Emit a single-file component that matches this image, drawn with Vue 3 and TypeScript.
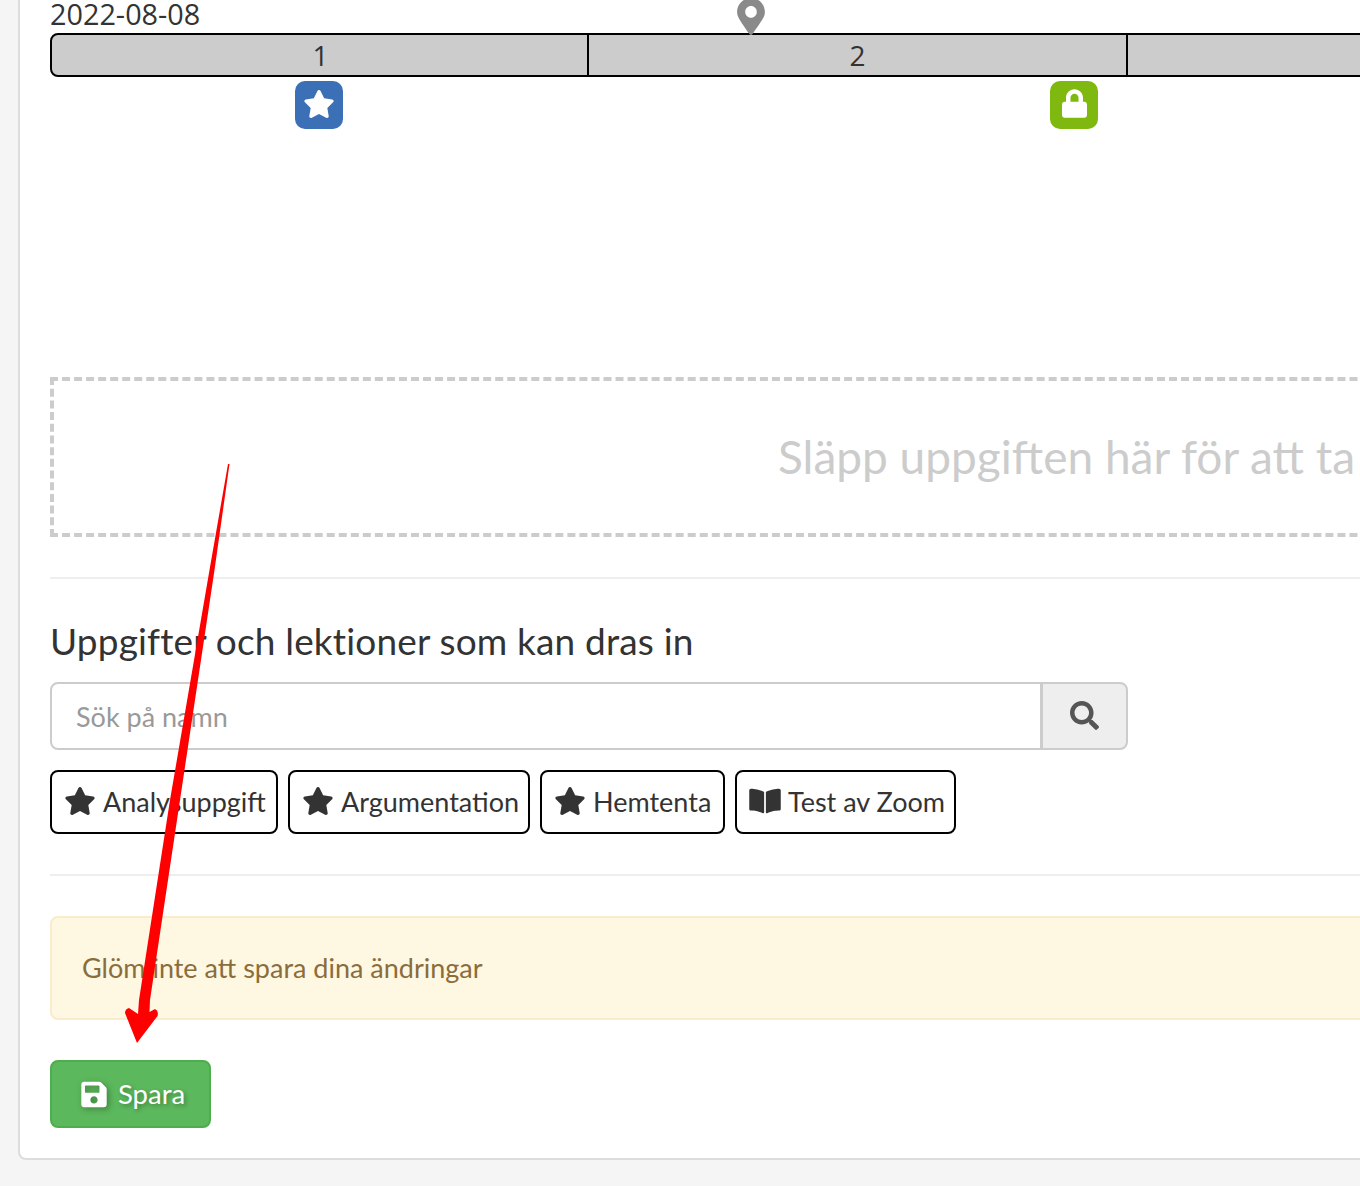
<script setup lang="ts">
const starPath = 'M259.3 17.8L194 150.2 47.9 171.5c-26.2 3.8-36.7 36.1-17.7 54.6l105.7 103-25 145.5c-4.5 26.3 23.2 46 46.4 33.7L288 439.6l130.7 68.7c23.2 12.2 50.9-7.4 46.4-33.7l-25-145.5 105.7-103c19-18.5 8.5-50.8-17.7-54.6L382 150.2 316.7 17.8c-11.7-23.6-45.6-23.9-57.4 0z'
const bookPath = 'M542.22 32.05c-54.8 3.11-163.72 14.43-230.96 55.59-4.64 2.84-7.27 7.89-7.27 13.17v363.87c0 11.55 12.63 18.85 23.28 13.49 69.18-34.82 169.23-44.32 218.7-46.92 16.89-.89 30.02-14.43 30.02-30.66V62.75c.01-17.71-15.35-31.74-33.77-30.7zM264.73 87.64C197.5 46.48 88.58 35.17 33.78 32.05 15.36 31.01 0 45.04 0 62.75V400.6c0 16.24 13.13 29.78 30.02 30.66 49.49 2.6 149.59 12.11 218.77 46.95 10.62 5.35 23.21-1.94 23.21-13.46V100.63c0-5.29-2.62-10.25-7.27-12.99z'
const tags = [
  { label: 'Analysuppgift', path: starPath, width: 228 },
  { label: 'Argumentation', path: starPath, width: 242 },
  { label: 'Hemtenta', path: starPath, width: 185 },
  { label: 'Test av Zoom', path: bookPath, width: 221 },
]
const segments = ['1', '2', '']
</script>

<template>
  <div class="page">
    <main class="card">
      <div class="date">2022-08-08</div>
      <div class="timeline">
        <svg class="pin" viewBox="0 0 384 512"><path d="M172.268 501.67C26.97 291.031 0 256.54 0 192 0 85.961 85.961 0 192 0s192 85.961 192 192c0 64.54-26.97 99.031-172.268 309.67-9.535 13.774-29.93 13.773-39.464 0zM192 272c44.183 0 80-35.817 80-80s-35.817-80-80-80-80 35.817-80 80 35.817 80 80 80z" /></svg>
        <div class="bar">
          <div v-for="(s, i) in segments" :key="i" class="segment">{{ s }}</div>
        </div>
        <div class="marker marker-star">
          <svg width="32" height="28" viewBox="0 0 576 512"><path :d="starPath" /></svg>
        </div>
        <div class="marker marker-lock">
          <svg width="25" height="29" viewBox="0 0 448 512"><path d="M400 224h-24v-72C376 68.2 307.8 0 224 0S72 68.2 72 152v72H48c-26.5 0-48 21.5-48 48v192c0 26.5 21.5 48 48 48h352c26.5 0 48-21.5 48-48V272c0-26.5-21.5-48-48-48zm-104 0H152v-72c0-39.7 32.3-72 72-72s72 32.3 72 72v72z" /></svg>
        </div>
      </div>

      <div class="dropzone">Släpp uppgiften här för att ta</div>
      <hr class="rule rule-top" />

      <h2 class="heading">Uppgifter och lektioner som kan dras in</h2>

      <div class="search">
        <div class="search-input">Sök på namn</div>
        <div class="search-btn">
          <svg width="29" height="29" viewBox="0 0 512 512"><path d="M505 442.7L405.3 343c-4.5-4.5-10.6-7-17-7H372c27.6-35.3 44-79.7 44-128C416 93.1 322.9 0 208 0S0 93.1 0 208s93.1 208 208 208c48.3 0 92.7-16.4 128-44v16.3c0 6.4 2.5 12.5 7 17l99.7 99.7c9.4 9.4 24.6 9.4 33.9 0l28.3-28.3c9.4-9.4 9.4-24.6.1-34zM208 336c-70.7 0-128-57.2-128-128 0-70.7 57.2-128 128-128 70.7 0 128 57.2 128 128 0 70.7-57.2 128-128 128z" /></svg>
        </div>
      </div>

      <div class="tags">
        <div v-for="t in tags" :key="t.label" class="tag" :style="{ width: t.width + 'px' }">
          <svg width="32" height="28" viewBox="0 0 576 512"><path :d="t.path" /></svg>
          <span>{{ t.label }}</span>
        </div>
      </div>

      <hr class="rule rule-bottom" />

      <div class="alert">Glöm inte att spara dina ändringar</div>

      <button class="save" type="button">
        <svg width="26" height="29" viewBox="0 0 448 512"><path d="M433.941 129.941l-83.882-83.882A48 48 0 0 0 316.118 32H48C21.49 32 0 53.49 0 80v352c0 26.51 21.49 48 48 48h352c26.51 0 48-21.49 48-48V163.882a48 48 0 0 0-14.059-33.941zM224 416c-35.346 0-64-28.654-64-64 0-35.346 28.654-64 64-64s64 28.654 64 64c0 35.346-28.654 64-64 64zm96-304.52V212c0 6.627-5.373 12-12 12H76c-6.627 0-12-5.373-12-12V108c0-6.627 5.373-12 12-12h228.52c3.183 0 6.235 1.264 8.485 3.515l3.48 3.48A11.996 11.996 0 0 1 320 111.48z" /></svg>
        <span>Spara</span>
      </button>
    </main>

    <svg class="arrow" width="1360" height="1186" viewBox="0 0 1360 1186">
      <path d="M228 464 L229.5 464 L214.5 570 L180 800 L150 1000 L149.5 1012 L155 1009 Q159 1011 157.5 1016 L137 1043 L125 1013 Q125 1009 129 1008 L138 1014 L139 1000 L170 800 L209.5 570 Z" fill="#ff0000" />
    </svg>
  </div>
</template>

<style>
html, body {
  margin: 0;
  height: 1186px;
  overflow: hidden;
  background: #f5f5f5;
}
</style>

<style scoped>
.page {
  position: relative;
  width: 1360px;
  height: 1186px;
  overflow: hidden;
  background: #f5f5f5;
  color: #333;
  font-family: "Lato", "Open Sans", sans-serif;
}
.card {
  box-sizing: border-box;
  width: 1500px;
  height: 1160px;
  margin-left: 18px;
  padding: 0 0 0 30px;
  background: #fff;
  border-left: 2px solid #ddd;
  border-bottom: 2px solid #ddd;
  border-bottom-left-radius: 8px;
}
.date {
  height: 33px;
  font-family: "Open Sans", sans-serif;
  font-size: 28.8px;
  line-height: 27px;
}
.timeline {
  position: relative;
  height: 344px;
}
.pin {
  position: absolute;
  left: 687px;
  top: -35px;
  width: 28px;
  height: 37px;
  fill: #8a8a8a;
  z-index: 1;
}
.bar {
  box-sizing: border-box;
  display: flex;
  width: 1500px;
  height: 44px;
  background: #ccc;
  border: 2px solid #000;
  border-radius: 8px;
}
.segment {
  box-sizing: border-box;
  flex: 0 0 539px;
  border-right: 2px solid #000;
  font-family: "Open Sans", sans-serif;
  font-size: 28px;
  line-height: 40px;
  text-align: center;
}
.segment:first-child {
  flex-basis: 537px;
  padding-left: 2px;
}
.marker {
  box-sizing: border-box;
  position: absolute;
  top: 48px;
  width: 48px;
  height: 48px;
  padding-bottom: 3px;
  border-radius: 10px;
  display: flex;
  align-items: center;
  justify-content: center;
}
.marker svg {
  fill: #fff;
}
.marker-star {
  left: 245px;
  background: #3b6fb6;
}
.marker-lock {
  left: 1000px;
  background: #7fb80e;
}
.dropzone {
  box-sizing: border-box;
  width: 1500px;
  height: 160px;
  padding-left: 724px;
  border: 4px dashed #ccc;
  color: #ccc;
  font-size: 46px;
  font-weight: 400;
  line-height: 152px;
  white-space: nowrap;
}
.rule {
  height: 0;
  margin: 0;
  border: 0;
  border-top: 2px solid #eee;
}
.rule-top {
  margin-top: 40px;
}
.heading {
  margin: 40px 0 0;
  height: 47px;
  font-size: 37px;
  font-weight: 400;
  line-height: 44px;
  letter-spacing: 0.17px;
}
.search {
  display: flex;
  width: 1078px;
  height: 68px;
  margin-top: 16px;
}
.search-input {
  box-sizing: border-box;
  flex: 1;
  padding-left: 24px;
  border: 2px solid #ccc;
  border-radius: 8px 0 0 8px;
  color: #999;
  font-size: 27px;
  line-height: 66px;
}
.search-btn {
  box-sizing: border-box;
  width: 87px;
  margin-left: -1px;
  padding-bottom: 2px;
  display: flex;
  align-items: center;
  justify-content: center;
  background: #eee;
  border: 2px solid #ccc;
  border-radius: 0 8px 8px 0;
}
.search-btn svg {
  fill: #555;
}
.tags {
  display: flex;
  gap: 10px;
  margin-top: 20px;
}
.tag {
  box-sizing: border-box;
  height: 64px;
  display: flex;
  align-items: center;
  gap: 7px;
  padding-left: 12px;
  padding-bottom: 2px;
  border: 2px solid #000;
  border-radius: 8px;
  font-size: 27px;
  white-space: nowrap;
}
.tag svg {
  flex: none;
  fill: #333;
}
.rule-bottom {
  margin-top: 40px;
}
.alert {
  box-sizing: border-box;
  width: 1500px;
  height: 104px;
  margin-top: 40px;
  padding-left: 30px;
  background: #fef7e2;
  border: 2px solid #faebcc;
  border-radius: 8px;
  color: #8a6d3b;
  font-size: 27px;
  line-height: 100px;
}
.save {
  box-sizing: border-box;
  display: flex;
  align-items: center;
  gap: 11px;
  width: 161px;
  height: 68px;
  margin-top: 40px;
  padding: 0 0 0 29px;
  background: #5cb85c;
  border: 2px solid #4cae4c;
  border-radius: 8px;
  color: #fff;
  font-family: inherit;
  font-size: 27.5px;
  text-shadow: 2px 2px 4px rgba(0, 0, 0, 0.3);
}
.save span {
  margin-top: -2px;
}
.save svg {
  fill: #fff;
  filter: drop-shadow(2px 2px 3px rgba(0, 0, 0, 0.3));
}
.arrow {
  position: absolute;
  left: 0;
  top: 0;
  pointer-events: none;
}
</style>
